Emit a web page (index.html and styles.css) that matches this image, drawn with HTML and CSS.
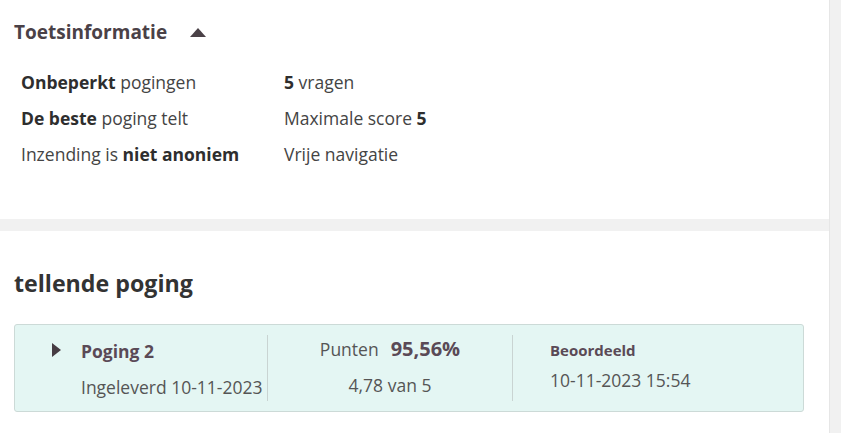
FILE: index.html
```html
<!DOCTYPE html>
<html lang="nl">
<head>
<meta charset="utf-8">
<title>Toetsinformatie</title>
<link rel="stylesheet" href="styles.css">
</head>
<body>
<div class="page">
  <main class="main">
    <section class="panel info-panel">
      <div class="panel-head">
        <h2 class="panel-title">Toetsinformatie</h2>
        <svg class="caret-up" width="16" height="9" viewBox="0 0 16 9" aria-hidden="true"><polygon points="0,9 8,0 16,9" fill="#4a4147"/></svg>
      </div>
      <div class="info-grid">
        <div class="info-item"><b>Onbeperkt</b> pogingen</div>
        <div class="info-item"><b>5</b> vragen</div>
        <div class="info-item"><b>De beste</b> poging telt</div>
        <div class="info-item">Maximale score <b>5</b></div>
        <div class="info-item">Inzending is <b>niet anoniem</b></div>
        <div class="info-item">Vrije navigatie</div>
      </div>
    </section>
    <section class="panel attempt-panel">
      <h2 class="attempt-title">tellende poging</h2>
      <div class="attempt-card">
        <div class="col col-attempt">
          <div class="attempt-name">
            <svg class="caret-right" width="9" height="14" viewBox="0 0 9 14" aria-hidden="true"><polygon points="0,0 9,7 0,14" fill="#463c43"/></svg>
            <span class="strong-purple">Poging 2</span>
          </div>
          <div class="line">Ingeleverd 10-11-2023</div>
        </div>
        <div class="col col-score">
          <div class="score-line"><span class="score-label">Punten</span><span class="score-value">95,56%</span></div>
          <div class="line">4,78 van 5</div>
        </div>
        <div class="col col-graded">
          <div class="graded-label">Beoordeeld</div>
          <div class="line">10-11-2023 15:54</div>
        </div>
      </div>
    </section>
  </main>
  <div class="side-strip"></div>
</div>
</body>
</html>
```

FILE: styles.css
```css
* { box-sizing: border-box; }

html, body {
  margin: 0;
  padding: 0;
}

body {
  background: #f1f1f1;
  font-family: "Open Sans", "Noto Sans", sans-serif;
  color: #444;
  overflow: hidden;
}

.page {
  display: flex;
  width: 841px;
  height: 433px;
}

.main {
  width: 829px;
  display: flex;
  flex-direction: column;
  gap: 12px;
}

.side-strip {
  width: 12px;
  border-left: 1px solid #e6e6e6;
  background: #f1f1f1;
}

.panel {
  background: #fff;
}

.info-panel {
  height: 219px;
  padding: 20px 14px 0;
}

.panel-head {
  display: flex;
  align-items: center;
  gap: 23px;
  height: 24px;
}

.panel-title {
  margin: 0;
  font-size: 19px;
  line-height: 24px;
  font-weight: 700;
  color: #4a4147;
}

.caret-up {
  display: block;
  margin-top: 0;
}

.info-grid {
  margin: 20px 0 0 7px;
  display: grid;
  grid-template-columns: 263px auto;
  grid-auto-rows: 36px;
  font-size: 17.5px;
  line-height: 36px;
  color: #444;
}

.info-item b {
  font-weight: 700;
  color: #2e2e2e;
}

.attempt-panel {
  flex: 1;
  padding: 37px 25px 0 14px;
}

.attempt-title {
  margin: 0;
  font-size: 23.2px;
  line-height: 30px;
  font-weight: 700;
  color: #333;
}

.attempt-card {
  margin-top: 26px;
  width: 790px;
  height: 88px;
  background: #e4f6f3;
  border: 1px solid #ccdad7;
  border-radius: 3px;
  padding: 10px 0;
  display: flex;
}

.col {
  display: flex;
  flex-direction: column;
  font-size: 17.5px;
  color: #555;
}

.line {
  line-height: 24px;
}

.col-attempt {
  width: 253px;
  border-right: 1px solid #c9d4d2;
  padding: 4px 0 0 37px;
  gap: 12px;
}

.attempt-name {
  display: flex;
  align-items: center;
  gap: 20px;
  line-height: 24px;
}

.caret-right {
  display: block;
  margin-top: -2px;
}

.col-attempt .line {
  padding-left: 29px;
}

.strong-purple {
  font-weight: 700;
  color: #5a4a56;
}

.col-score {
  width: 245px;
  border-right: 1px solid #c9d4d2;
  align-items: center;
  padding-top: 2px;
  gap: 12px;
}

.score-line {
  line-height: 24px;
  display: flex;
  align-items: baseline;
  gap: 12px;
}

.score-value {
  font-size: 20px;
  font-weight: 700;
  color: #5a4a56;
}

.col-graded {
  flex: 1;
  padding: 5px 0 0 37px;
  gap: 8px;
}

.graded-label {
  font-size: 15px;
  line-height: 20px;
  font-weight: 700;
  color: #5a4a56;
}
```
